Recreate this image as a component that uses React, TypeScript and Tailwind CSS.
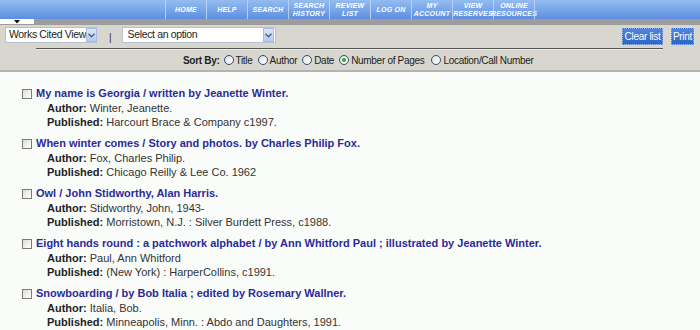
import React from "react";

const navItems: { lines: string[] }[] = [
  { lines: ["HOME"] },
  { lines: ["HELP"] },
  { lines: ["SEARCH"] },
  { lines: ["SEARCH", "HISTORY"] },
  { lines: ["REVIEW", "LIST"] },
  { lines: ["LOG ON"] },
  { lines: ["MY", "ACCOUNT"] },
  { lines: ["VIEW", "RESERVES"] },
  { lines: ["ONLINE", "RESOURCES"] },
];

const items = [
  {
    title: "My name is Georgia / written by Jeanette Winter.",
    author: "Winter, Jeanette.",
    pub: "Harcourt Brace & Company c1997.",
  },
  {
    title: "When winter comes / Story and photos. by Charles Philip Fox.",
    author: "Fox, Charles Philip.",
    pub: "Chicago Reilly & Lee Co. 1962",
  },
  {
    title: "Owl / John Stidworthy, Alan Harris.",
    author: "Stidworthy, John, 1943-",
    pub: "Morristown, N.J. : Silver Burdett Press, c1988.",
  },
  {
    title:
      "Eight hands round : a patchwork alphabet / by Ann Whitford Paul ; illustrated by Jeanette Winter.",
    author: "Paul, Ann Whitford",
    pub: "(New York) : HarperCollins, c1991.",
  },
  {
    title: "Snowboarding / by Bob Italia ; edited by Rosemary Wallner.",
    author: "Italia, Bob.",
    pub: "Minneapolis, Minn. : Abdo and Daughters, 1991.",
  },
];

function Chevron() {
  return (
    <div className="w-[11px] h-[14px] shrink-0 bg-gradient-to-b from-[#dbe6fa] to-[#b7cbf0] border border-[#aabde6] flex items-center justify-center">
      <svg width="7" height="5" viewBox="0 0 7 5">
        <path d="M0.5 0.8 L3.5 3.8 L6.5 0.8" fill="none" stroke="#4d6185" strokeWidth="1.4" />
      </svg>
    </div>
  );
}

function Radio({ checked }: { checked?: boolean }) {
  return (
    <span className="inline-flex shrink-0 w-[10px] h-[10px] rounded-full border border-[#2d4e7c] bg-gradient-to-br from-[#e0e0da] to-white items-center justify-center mr-[2px]">
      {checked && <span className="w-[4px] h-[4px] rounded-full bg-[#2fa82f]" />}
    </span>
  );
}

export default function App() {
  return (
    <div
      className="w-[700px] h-[330px] bg-[#fafcfa] overflow-hidden text-[#333]"
      style={{ fontFamily: '"Liberation Sans", Arial, sans-serif' }}
    >
      {/* nav bar */}
      <div className="h-[19px] bg-gradient-to-b from-[#94bcf0] via-[#7aa6ea] to-[#5d8de0] flex pl-[165px]">
        {navItems.map((n, i) => (
          <div
            key={i}
            className="w-[41px] h-full border-l border-[#b5cff5] flex flex-col items-center justify-center text-white font-bold italic text-[7px] leading-[8px] tracking-[0.2px]"
          >
            {n.lines.map((l, j) => (
              <span key={j} className="whitespace-nowrap">{l}</span>
            ))}
          </div>
        ))}
        <div className="border-l border-[#b5cff5] h-full" />
      </div>
      {/* gray strip */}
      <div className="h-[6px] bg-[#9c9c9c] flex">
        <div className="w-[34px] h-[5px] bg-white flex justify-center items-center">
          <svg width="6" height="4" viewBox="0 0 6 4">
            <path d="M0 0 L6 0 L3 3.5 Z" fill="#111" />
          </svg>
        </div>
      </div>
      {/* toolbar */}
      <div className="bg-[#d7d7cf] border-b-2 border-[#b4b4ae]">
        <div className="flex items-start h-[23px] pt-[2px] pl-[5px] pr-[6px]">
          <div className="w-[92px] h-[16px] bg-white border border-[#b6c2d4] flex items-center justify-between pl-[3px] pr-[1px] text-[10.5px] tracking-[-0.35px] text-[#222] whitespace-nowrap">
            <span>Works Cited View</span>
            <Chevron />
          </div>
          <span className="ml-[12px] mt-[3px] text-[10px] text-[#333]">|</span>
          <div className="ml-[10px] w-[154px] h-[16px] bg-white border border-[#b6c2d4] flex items-center justify-between pl-[5px] pr-[1px] text-[10.5px] tracking-[-0.35px] text-[#222] whitespace-nowrap">
            <span>Select an option</span>
            <Chevron />
          </div>
          <div className="flex-1" />
          <button className="mt-[1px] h-[17px] w-[41px] p-0 bg-gradient-to-b from-[#4f84de] to-[#2f65c6] border border-dotted border-[#9bb8ec] text-white text-[10px] tracking-[-0.3px] leading-none whitespace-nowrap">
            Clear list
          </button>
          <button className="ml-[8px] mt-[1px] h-[17px] w-[23px] p-0 bg-gradient-to-b from-[#4f84de] to-[#2f65c6] border border-dotted border-[#9bb8ec] text-white text-[10px] tracking-[-0.3px] leading-none whitespace-nowrap">
            Print
          </button>
        </div>
        <div className="ml-[36px] mr-[37px] h-[2px] border-t border-[#555] border-b border-b-[#ecece6]" />
        <div className="flex items-center h-[20px] pl-[183px] text-[10px] tracking-[-0.3px] text-[#222] whitespace-nowrap">
          <span className="font-bold mr-[4px]">Sort By:</span>
          <Radio />
          <span className="mr-[5px]">Title</span>
          <Radio />
          <span className="mr-[5px]">Author</span>
          <Radio />
          <span className="mr-[5px]">Date</span>
          <Radio checked />
          <span className="mr-[7px]">Number of Pages</span>
          <Radio />
          <span>Location/Call Number</span>
        </div>
      </div>
      {/* list */}
      <div className="pt-[14px]">
        {items.map((it, i) => (
          <div key={i} className="h-[50px]">
            <div className="flex items-center h-[15px]">
              <span className="ml-[22px] w-[10px] h-[10px] border border-[#7a7a7a] bg-gradient-to-br from-[#dcdcd6] to-white" />
              <span className="ml-[4px] text-[11px] font-bold text-[#2b2b98] whitespace-nowrap">{it.title}</span>
            </div>
            <div className="pl-[47px] text-[11px] leading-[14px] text-[#333]">
              <div>
                <span className="font-bold text-[#222]">Author:</span> {it.author}
              </div>
              <div>
                <span className="font-bold text-[#222]">Published:</span> {it.pub}
              </div>
            </div>
          </div>
        ))}
      </div>
    </div>
  );
}
